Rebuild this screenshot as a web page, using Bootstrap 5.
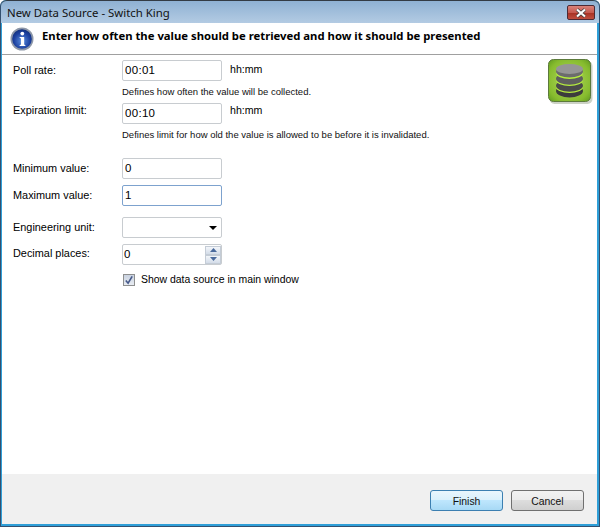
<!DOCTYPE html>
<html lang="en"><head><meta charset="utf-8"><title>New Data Source - Switch King</title>
<link href="https://cdn.jsdelivr.net/npm/bootstrap@5.3.0/dist/css/bootstrap.min.css" rel="stylesheet">
<style>
html,body{width:600px;height:527px;overflow:hidden;margin:0;background:#fff}
body{font-family:"Liberation Sans",Arial,sans-serif;font-size:10.9px;color:#000;line-height:14px}
.frame-win{width:600px;height:527px;background:#2f9fd8;border-radius:6px 6px 0 0;border-left:1px solid #33506f;border-right:1px solid #33506f;border-bottom:1px solid #33506f;padding-left:1px;padding-right:2px;padding-bottom:2px}
.title-bar{height:23px;flex:none;margin:0 -2px 0 -1px;padding:0 4px 0 6px;background:linear-gradient(#8fb1d3,#b3cbe3);border-top:1px solid #333b44;border-radius:6px 6px 0 0}
.title-text{font-family:"Noto Sans",sans-serif;font-size:11.4px;line-height:24px;color:#111}
.close-x{width:28px;height:15px;margin-top:4px;border:1px solid #4d2a34;border-radius:2px;background:linear-gradient(#d9827a,#c55a4f 50%,#a83225 55%,#c04e3e)}
.head-band{height:32px;flex:none;background:#fff;border-bottom:1px solid #a0a0a0;padding-left:8px}
.head-title{font-family:"Noto Sans",sans-serif;font-weight:700;font-size:11.3px;margin-left:8px;padding-bottom:6px;color:#000}
.main-area{background:#fff}
.form-col{padding:5px 0 0 11px}
.f-label{width:109px;flex:none;padding-top:3px}
.f-label-up{padding-top:0}
.f-input{width:100px;height:21px;flex:none;border:1px solid #c8ccd0;border-radius:2px;padding:2px 2px 0 2px;background:#fff;line-height:15px;font-size:11.5px;letter-spacing:.3px}
.f-input.is-hot{border-color:#7da2ce}
.f-unit{margin-left:8px;padding-top:2px;font-size:10.6px}
.f-unit-up{padding-top:0}
.f-hint{margin:4px 0 0 109px;font-size:9.5px;line-height:14px;color:#111}
.row-a{margin-top:16px}.row-b{margin-top:6px}.row-c{margin-top:11px}.row-d{margin-top:6px}
.row-e{margin:8px 0 0 110px}
.spin-text{margin-left:-3px;margin-top:-1px}
.label-tight{padding-top:2px}
.show-text{margin-left:6px;font-size:10.45px}
.db-logo{width:46px;height:46px;margin:4px 3px 0 0;flex:none}
.caret-down{width:0;height:0;border-left:4px solid transparent;border-right:4px solid transparent;border-top:4px solid #000;margin:0 2px 0 auto}
.spin-col{width:16px;margin:0 0 0 auto}
.spin-btn{height:9px;background:linear-gradient(#f3f6fa,#d3dce8);border:1px solid #c4ccd6;display:flex;align-items:center;justify-content:center}
.check-box{width:12px;height:12px;border:1px solid #8e8f8f;background:linear-gradient(#c9d2e0,#e8ecf2);flex:none}
.foot-band{height:50px;flex:none;background:#f0f0f0;padding:16px 13px 0 0}
.win-btn{width:73px;height:21px;line-height:21px;font-size:10.4px;text-align:center;border-radius:3px;color:#111}
.win-btn-a{border:1px solid #3c7fb1;background:linear-gradient(#eaf6fd,#d9f0fc 50%,#bee6fd 50%,#a7d9f5);margin-right:8px}
.win-btn-b{border:1px solid #707070;background:linear-gradient(#f2f2f2,#ebebeb 50%,#dddddd 50%,#cfcfcf)}
</style></head><body>
<div class="frame-win d-flex flex-column">
 <div class="title-bar d-flex justify-content-between">
  <div class="title-text">New Data Source - Switch King</div>
  <div class="close-x d-flex align-items-center justify-content-center"><svg width="14" height="10" viewBox="0 0 14 10"><path d="M3 1.5L11 8.5M11 1.5L3 8.5" stroke="#3a3a3a" stroke-width="3.6"/><path d="M3 1.5L11 8.5M11 1.5L3 8.5" stroke="#fff" stroke-width="2.2"/></svg></div>
 </div>
 <div class="head-band d-flex align-items-center">
  <svg width="24" height="24" viewBox="0 0 24 24"><defs><radialGradient id="g1" cx=".5" cy=".6" r=".6"><stop offset="0" stop-color="#5b8fe0"/><stop offset=".7" stop-color="#1b3f9e"/><stop offset="1" stop-color="#12307c"/></radialGradient></defs><circle cx="12" cy="12" r="11.5" fill="#8d97a8"/><circle cx="12" cy="12" r="9.8" fill="url(#g1)"/><circle cx="12.3" cy="6.6" r="1.9" fill="#fff"/><path d="M9.6 10h4.6v7.6l1.2.6v.8H9.6v-.8l1.3-.6v-6.2l-1.3-.7z" fill="#fff"/></svg>
  <div class="head-title">Enter how often the value should be retrieved and how it should be presented</div>
 </div>
 <div class="main-area flex-grow-1 d-flex justify-content-between">
  <div class="form-col">
   <div class="d-flex"><div class="f-label">Poll rate:</div><div class="f-input">00:01</div><div class="f-unit">hh:mm</div></div>
   <div class="f-hint">Defines how often the value will be collected.</div>
   <div class="d-flex mt-1"><div class="f-label f-label-up">Expiration limit:</div><div class="f-input">00:10</div><div class="f-unit f-unit-up">hh:mm</div></div>
   <div class="f-hint">Defines limit for how old the value is allowed to be before it is invalidated.</div>
   <div class="d-flex row-a"><div class="f-label">Minimum value:</div><div class="f-input">0</div></div>
   <div class="d-flex row-b"><div class="f-label">Maximum value:</div><div class="f-input is-hot">1</div></div>
   <div class="d-flex row-c"><div class="f-label">Engineering unit:</div><div class="f-input d-flex align-items-center pt-0"><span class="caret-down"></span></div></div>
   <div class="d-flex row-d"><div class="f-label label-tight">Decimal places:</div><div class="f-input d-flex align-items-center p-0 ps-1"><span class="spin-text">0</span><div class="spin-col"><div class="spin-btn"><svg width="7" height="4"><path d="M3.5 0L7 4H0z" fill="#4a6a9c"/></svg></div><div class="spin-btn"><svg width="7" height="4"><path d="M0 0h7L3.5 4z" fill="#4a6a9c"/></svg></div></div></div></div>
   <div class="d-flex align-items-center row-e"><div class="check-box d-flex align-items-center justify-content-center"><svg width="10" height="10" viewBox="0 0 11 11"><path d="M2 6l2.5 3L9 1.5" fill="none" stroke="#46598a" stroke-width="1.8"/></svg></div><div class="show-text">Show data source in main window</div></div>
  </div>
  <svg class="db-logo" viewBox="0 0 46 46"><defs><radialGradient id="g2" cx=".5" cy=".5" r=".7"><stop offset="0" stop-color="#b4dc5e"/><stop offset=".75" stop-color="#86bb2e"/><stop offset="1" stop-color="#5f9a1f"/></radialGradient></defs><rect x="1.5" y="2" width="43" height="43" rx="5" fill="#9aa68d" opacity=".5"/><rect x=".5" y=".5" width="42" height="42" rx="5" fill="url(#g2)" stroke="#5c7a3c"/><ellipse cx="21.5" cy="32" rx="13.5" ry="6.5" fill="#3c3c3c"/><ellipse cx="21.5" cy="28" rx="13.5" ry="6" fill="#b6ee3e"/><ellipse cx="21.5" cy="26.7" rx="13.5" ry="6" fill="#4a4a4a"/><ellipse cx="21.5" cy="21" rx="13.5" ry="6" fill="#b6ee3e"/><ellipse cx="21.5" cy="19.7" rx="13.5" ry="6" fill="#5e5e5e"/><ellipse cx="21.5" cy="14" rx="13.5" ry="6" fill="#b6ee3e"/><ellipse cx="21.5" cy="12.5" rx="13.5" ry="6" fill="#6c6c6c"/><ellipse cx="21.5" cy="10" rx="13.5" ry="5" fill="#969696"/></svg>
 </div>
 <div class="foot-band d-flex justify-content-end">
  <div class="win-btn win-btn-a">Finish</div><div class="win-btn win-btn-b">Cancel</div>
 </div>
</div>
</body></html>
